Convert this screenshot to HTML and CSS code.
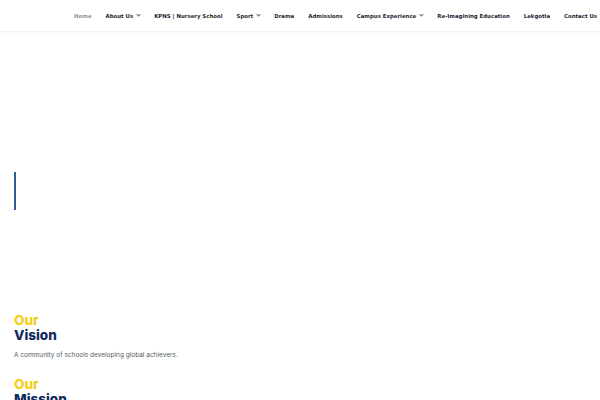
FILE: index.html
```html
<!DOCTYPE html>
<html>
<head>
<meta charset="utf-8">
<link rel="stylesheet" href="styles.css">
</head>
<body>
<header class="site-header">
  <nav class="nav">
    <a class="nav-item active">Home</a>
    <a class="nav-item">About Us <span class="chev"></span></a>
    <a class="nav-item">KPNS | Nursery School</a>
    <a class="nav-item">Sport <span class="chev"></span></a>
    <a class="nav-item">Drama</a>
    <a class="nav-item">Admissions</a>
    <a class="nav-item">Campus Experience <span class="chev"></span></a>
    <a class="nav-item">Re-Imagining Education</a>
    <a class="nav-item">Lekgotla</a>
    <a class="nav-item">Contact Us</a>
  </nav>
</header>
<section class="hero">
  <div class="hero-line"></div>
</section>
<section class="statements">
  <div class="statement">
    <h2 class="title"><span class="our">Our</span><span class="word">Vision</span></h2>
    <p class="text">A community of schools developing global achievers.</p>
  </div>
  <div class="statement">
    <h2 class="title"><span class="our">Our</span><span class="word">Mission</span></h2>
  </div>
</section>
</body>
</html>
```
FILE: styles.css
```css
html, body {
  margin: 0;
  padding: 0;
  background: #ffffff;
  overflow: hidden;
}
body {
  font-family: "DejaVu Sans", sans-serif;
}
.site-header {
  height: 31px;
  border-bottom: 1px solid #f1f1f1;
  box-shadow: 0 2px 3px rgba(0,0,0,0.03);
  display: flex;
  justify-content: flex-end;
}
.nav {
  display: flex;
  align-items: center;
  gap: 14px;
  padding-right: 3px;
}
.nav-item {
  font-size: 5.4px;
  font-weight: bold;
  color: #1f2733;
  display: flex;
  align-items: center;
  gap: 3px;
  white-space: nowrap;
}
.nav-item.active {
  color: #8a8f96;
}
.chev {
  width: 2px;
  height: 2px;
  border-right: 0.7px solid #666;
  border-bottom: 0.7px solid #666;
  transform: rotate(45deg);
  margin-top: -2px;
  margin-left: 1px;
}
.hero {
  height: 281px;
  box-sizing: border-box;
  padding: 140px 0 0 14px;
}
.hero-line {
  width: 1.5px;
  height: 38px;
  background: #2f5a92;
}
.statements {
  padding-left: 14px;
  display: flex;
  flex-direction: column;
  gap: 18px;
}
.title {
  margin: 0;
  font-family: "Inter", "Liberation Sans", sans-serif;
  font-weight: 800;
  font-size: 13.5px;
  line-height: 15px;
  display: flex;
  flex-direction: column;
}
.our {
  color: #f2cf1c;
}
.word {
  color: #102a5e;
}
.text {
  margin: 8px 0 0;
  font-family: "Inter", "Liberation Sans", sans-serif;
  font-size: 6.5px;
  color: #555b63;
}
```
